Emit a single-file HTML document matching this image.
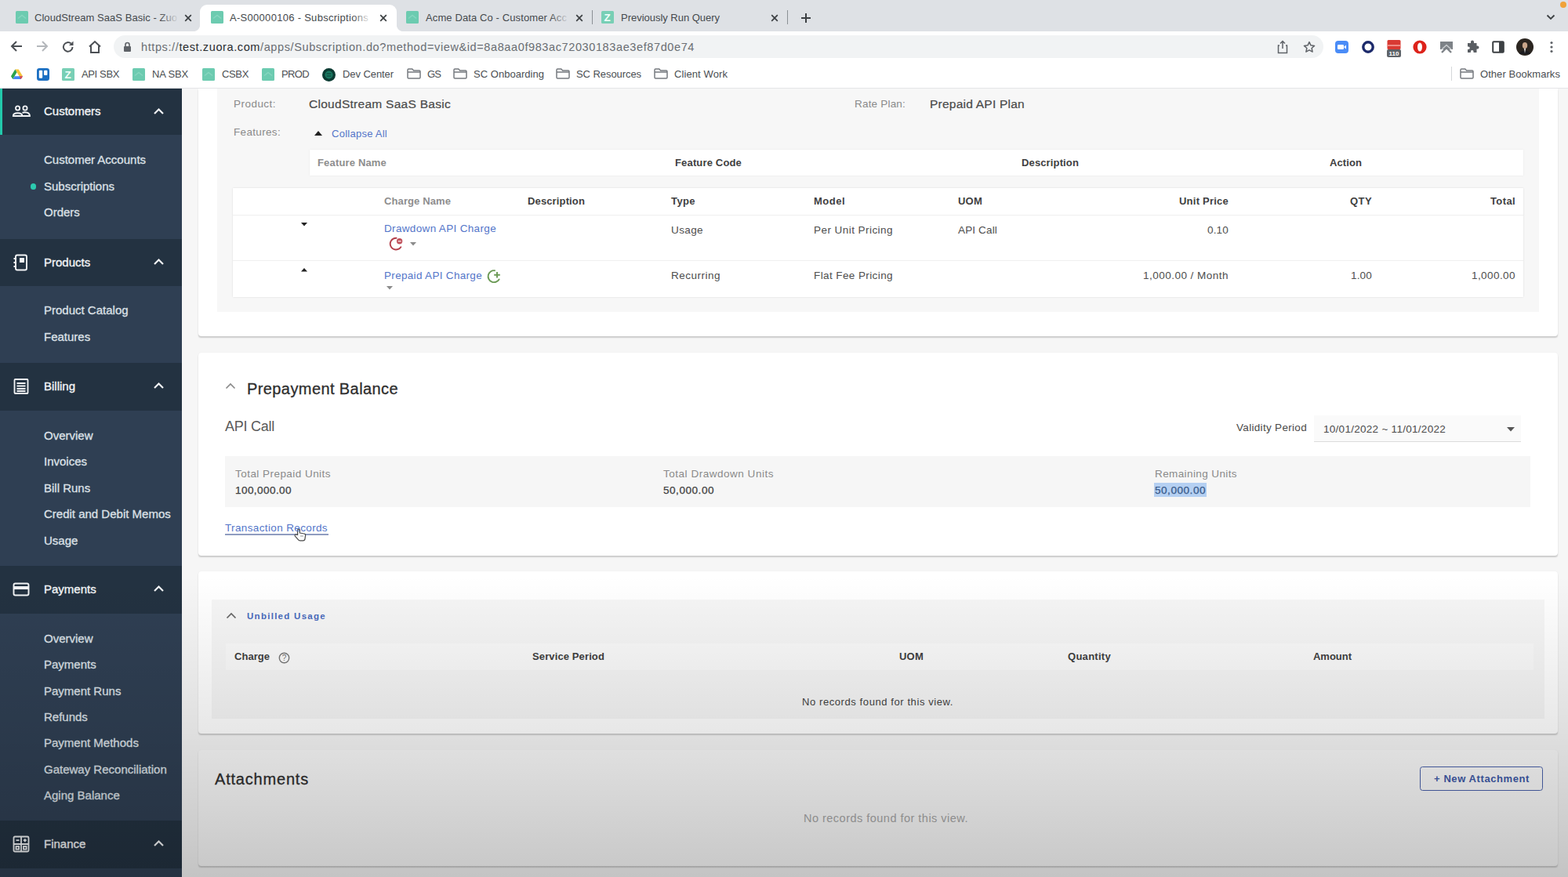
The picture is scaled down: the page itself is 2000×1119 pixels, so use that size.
<!DOCTYPE html><html lang="en"><head><meta charset="utf-8"><title>A-S00000106 - Subscriptions</title><style>
html,body{margin:0;padding:0}body{width:2000px;height:1119px;overflow:hidden;position:relative;background:#f6f6f6;font-family:"Liberation Sans", sans-serif;}
header,nav,main{position:absolute;left:0;top:0;width:0;height:0;display:block}
body div,body span.t,body svg{position:absolute}
span.t{white-space:nowrap;line-height:1;display:block}

.fav{width:16px;height:16px;background:#6ccbb0;border-radius:2px}
.sep{width:1px;background:#9aa0a6}

</style></head><body>
<main id="main">
<div style="left:253px;top:113px;width:1734px;height:316px;background:#ffffff;box-shadow:0 2px 1.5px -0.5px rgba(0,0,0,0.17), 0 0 1.5px rgba(0,0,0,0.06);border-radius:0 0 4px 4px;clip-path:inset(0 -5px -5px -5px);"></div>
<div style="left:277px;top:113px;width:1686px;height:284.5px;background:#f7f7f7;"></div>
<svg style="left:401px;top:167px;" width="10" height="6" viewBox="0 0 10 6"><path d="M0 6 L5 0 L10 6 Z" fill="#222"/></svg>
<div style="left:395px;top:191px;width:1548px;height:33px;background:#ffffff;box-shadow:0 0 2px rgba(0,0,0,0.08);"></div>
<div style="left:297px;top:240px;width:1646px;height:139px;background:#ffffff;box-shadow:0 0 2px rgba(0,0,0,0.12);"></div>
<div style="left:297px;top:274px;width:1646px;height:1px;background:#efefef;"></div>
<div style="left:297px;top:332px;width:1646px;height:1px;background:#efefef;"></div>
<svg style="left:384px;top:284px;" width="8" height="5" viewBox="0 0 8 5"><path d="M0 0 L8 0 L4 4.5 Z" fill="#222"/></svg>
<svg style="left:494px;top:300px;" width="22" height="22" viewBox="0 0 22 22"><path d="M17.3 15.2 A7.4 7.4 0 1 1 11.6 3.7" stroke="#b3404c" stroke-width="1.9" fill="none" stroke-linecap="round"/><circle cx="15.6" cy="7.8" r="3.7" fill="#c0525d"/><path d="M13.6 7.8 H17.6" stroke="#f7dfe1" stroke-width="1.4"/></svg>
<svg style="left:523px;top:309px;" width="8" height="5" viewBox="0 0 8 5"><path d="M0 0 L8 0 L4 4.5 Z" fill="#8b8b8b"/></svg>
<svg style="left:384px;top:342px;" width="8" height="5" viewBox="0 0 8 5"><path d="M0 4.5 L4 0 L8 4.5 Z" fill="#222"/></svg>
<svg style="left:619px;top:341.5px;" width="22" height="22" viewBox="0 0 22 22"><path d="M17.6 14.4 A7.5 7.5 0 1 1 12 3.2" stroke="#6b9a55" stroke-width="1.9" fill="none" stroke-linecap="round"/><path d="M15 5 V12.6 M11.2 8.8 H18.8" stroke="#6b9a55" stroke-width="1.9"/></svg>
<svg style="left:493px;top:365px;" width="8" height="5" viewBox="0 0 8 5"><path d="M0 0 L8 0 L4 4.5 Z" fill="#8b8b8b"/></svg>
<div style="left:253px;top:450px;width:1734px;height:259px;background:#ffffff;box-shadow:0 2px 1.5px -0.5px rgba(0,0,0,0.17), 0 0 1.5px rgba(0,0,0,0.06);border-radius:4px;"></div>
<svg style="left:287px;top:487.5px;" width="14" height="9" viewBox="0 0 14 9"><path d="M1.5 7.5 L7 2 L12.5 7.5" stroke="#888" stroke-width="1.6" fill="none"/></svg>
<div style="left:1676px;top:530px;width:264px;height:33px;background:#fafafa;border-bottom:1px solid #dcdcdc;"></div>
<svg style="left:1922px;top:545px;" width="10" height="6" viewBox="0 0 10 6"><path d="M0 0 L10 0 L5 5.5 Z" fill="#555"/></svg>
<div style="left:287px;top:581.7px;width:1665px;height:65.2px;background:#f6f6f6;"></div>
<div style="left:1472px;top:616px;width:66.5px;height:18px;background:#b5d0f2;"></div>
<div style="left:287px;top:681.4px;width:132px;height:1.2px;background:#8f9cc0;"></div>
<div style="left:253px;top:729px;width:1734px;height:207px;background:#ffffff;box-shadow:0 2px 1.5px -0.5px rgba(0,0,0,0.17), 0 0 1.5px rgba(0,0,0,0.06);border-radius:4px;"></div>
<div style="left:270px;top:765px;width:1700px;height:152px;background:#f6f6f6;"></div>
<svg style="left:288px;top:781.2px;" width="14" height="9" viewBox="0 0 14 9"><path d="M1.5 7.5 L7 2 L12.5 7.5" stroke="#666" stroke-width="1.7" fill="none"/></svg>
<div style="left:288px;top:821px;width:1668px;height:34px;background:#fafafa;"></div>
<svg style="left:355px;top:831.5px;" width="15" height="15" viewBox="0 0 15 15"><circle cx="7.5" cy="7.5" r="6.2" stroke="#777" stroke-width="1.4" fill="none"/><text x="7.5" y="11.2" font-size="10" font-family="Liberation Sans, sans-serif" fill="#777" text-anchor="middle">?</text></svg>
<div style="left:253px;top:957px;width:1734px;height:148px;background:#fafafa;box-shadow:0 2px 1.5px -0.5px rgba(0,0,0,0.17), 0 0 1.5px rgba(0,0,0,0.06);border-radius:4px;"></div>
<div style="left:1810.5px;top:978px;width:155px;height:29px;background:transparent;border:1.5px solid #4a62ab;border-radius:3.5px;"></div>
<svg style="left:374px;top:673px;" width="19" height="19" viewBox="0 0 19 19"><path d="M5.6 9.4 V3.6 a1.4 1.4 0 0 1 2.8 0 V7 l5.6 1 a2 2 0 0 1 1.6 2.3 L15 14.6 a2.6 2.6 0 0 1 -2.6 2.2 H8.8 a3 3 0 0 1 -2.4 -1.2 L2.2 10.8 a1.3 1.3 0 0 1 2 -1.6 Z" fill="#fbfbfb" stroke="#4a4a4a" stroke-width="1.2" stroke-linejoin="round"/><path d="M9 11 h4" stroke="#999" stroke-width="1"/></svg>
<span class="t" id="t39" style="top:126.45px;font-size:13.5px;color:#8a8a8a;letter-spacing:0.465px;left:298px;">Product:</span>
<span class="t" id="t40" style="top:124.85px;font-size:15.5px;color:#4a4a4a;letter-spacing:0.278px;left:394px;-webkit-text-stroke:0.2px #4a4a4a;">CloudStream SaaS Basic</span>
<span class="t" id="t41" style="top:126.45px;font-size:13.5px;color:#8a8a8a;letter-spacing:0.195px;left:1090px;">Rate Plan:</span>
<span class="t" id="t42" style="top:124.85px;font-size:15.5px;color:#4a4a4a;letter-spacing:0.237px;left:1186px;-webkit-text-stroke:0.2px #4a4a4a;">Prepaid API Plan</span>
<span class="t" id="t43" style="top:162.45px;font-size:13.5px;color:#8a8a8a;letter-spacing:0.330px;left:298px;">Features:</span>
<span class="t" id="t44" style="top:163.50px;font-size:13px;color:#5375c9;letter-spacing:0.255px;left:423px;">Collapse All</span>
<span class="t" id="t45" style="top:200.50px;font-size:13px;color:#8e8e8e;font-weight:700;letter-spacing:0.168px;left:405px;">Feature Name</span>
<span class="t" id="t46" style="top:200.50px;font-size:13px;color:#3f3f3f;font-weight:700;letter-spacing:0.160px;left:861px;">Feature Code</span>
<span class="t" id="t47" style="top:200.50px;font-size:13px;color:#3f3f3f;font-weight:700;letter-spacing:0.135px;left:1303px;">Description</span>
<span class="t" id="t48" style="top:200.50px;font-size:13px;color:#3f3f3f;font-weight:700;letter-spacing:0.091px;left:1696px;">Action</span>
<span class="t" id="t49" style="top:249.50px;font-size:13px;color:#8e8e8e;font-weight:700;letter-spacing:0.108px;left:490px;">Charge Name</span>
<span class="t" id="t50" style="top:249.50px;font-size:13px;color:#3f3f3f;font-weight:700;letter-spacing:0.135px;left:673px;">Description</span>
<span class="t" id="t51" style="top:249.50px;font-size:13px;color:#3f3f3f;font-weight:700;letter-spacing:0.402px;left:856px;">Type</span>
<span class="t" id="t52" style="top:249.50px;font-size:13px;color:#3f3f3f;font-weight:700;letter-spacing:0.487px;left:1038px;">Model</span>
<span class="t" id="t53" style="top:249.50px;font-size:13px;color:#3f3f3f;font-weight:700;letter-spacing:0.219px;left:1222px;">UOM</span>
<span class="t" id="t54" style="top:249.50px;font-size:13px;color:#3f3f3f;font-weight:700;letter-spacing:0.231px;left:1504px;">Unit Price</span>
<span class="t" id="t55" style="top:249.50px;font-size:13px;color:#3f3f3f;font-weight:700;letter-spacing:0.422px;left:1722px;">QTY</span>
<span class="t" id="t56" style="top:249.50px;font-size:13px;color:#3f3f3f;font-weight:700;letter-spacing:0.381px;left:1901px;">Total</span>
<span class="t" id="t57" style="top:285.25px;font-size:13.5px;color:#5375c9;letter-spacing:0.338px;left:490px;">Drawdown API Charge</span>
<span class="t" id="t58" style="top:286.65px;font-size:13.5px;color:#4d4d4d;letter-spacing:0.394px;left:856px;">Usage</span>
<span class="t" id="t59" style="top:286.65px;font-size:13.5px;color:#4d4d4d;letter-spacing:0.450px;left:1038px;">Per Unit Pricing</span>
<span class="t" id="t60" style="top:286.65px;font-size:13.5px;color:#4d4d4d;letter-spacing:0.152px;left:1222px;">API Call</span>
<span class="t" id="t61" style="top:286.65px;font-size:13.5px;color:#4d4d4d;letter-spacing:0.180px;left:1540px;">0.10</span>
<span class="t" id="t62" style="top:345.05px;font-size:13.5px;color:#5375c9;letter-spacing:0.315px;left:490px;">Prepaid API Charge</span>
<span class="t" id="t63" style="top:345.05px;font-size:13.5px;color:#4d4d4d;letter-spacing:0.497px;left:856px;">Recurring</span>
<span class="t" id="t64" style="top:345.05px;font-size:13.5px;color:#4d4d4d;letter-spacing:0.403px;left:1038px;">Flat Fee Pricing</span>
<span class="t" id="t65" style="top:345.05px;font-size:13.5px;color:#4d4d4d;letter-spacing:0.479px;left:1458px;">1,000.00 / Month</span>
<span class="t" id="t66" style="top:345.05px;font-size:13.5px;color:#4d4d4d;letter-spacing:0.180px;left:1723px;">1.00</span>
<span class="t" id="t67" style="top:345.05px;font-size:13.5px;color:#4d4d4d;letter-spacing:0.430px;left:1877px;">1,000.00</span>
<span class="t" id="t68" style="top:485.80px;font-size:20px;color:#2e2e2e;letter-spacing:0.407px;left:315px;-webkit-text-stroke:0.3px #2e2e2e;">Prepayment Balance</span>
<span class="t" id="t69" style="top:535.00px;font-size:18px;color:#5a5a5a;letter-spacing:-0.254px;left:287px;">API Call</span>
<span class="t" id="t70" style="top:538.75px;font-size:13.5px;color:#4a4a4a;letter-spacing:0.314px;left:1577px;">Validity Period</span>
<span class="t" id="t71" style="top:541.05px;font-size:13.5px;color:#4a4a4a;letter-spacing:0.282px;left:1688px;">10/01/2022 ~ 11/01/2022</span>
<span class="t" id="t72" style="top:598.45px;font-size:13.5px;color:#8a8a8a;letter-spacing:0.457px;left:300px;">Total Prepaid Units</span>
<span class="t" id="t73" style="top:619.45px;font-size:13.5px;color:#3e3e3e;letter-spacing:0.442px;left:300px;-webkit-text-stroke:0.25px #3e3e3e;">100,000.00</span>
<span class="t" id="t74" style="top:598.45px;font-size:13.5px;color:#8a8a8a;letter-spacing:0.522px;left:846px;">Total Drawdown Units</span>
<span class="t" id="t75" style="top:619.45px;font-size:13.5px;color:#3e3e3e;letter-spacing:0.549px;left:846px;-webkit-text-stroke:0.25px #3e3e3e;">50,000.00</span>
<span class="t" id="t76" style="top:598.45px;font-size:13.5px;color:#8a8a8a;letter-spacing:0.397px;left:1473px;">Remaining Units</span>
<span class="t" id="t77" style="top:619.45px;font-size:13.5px;color:#37598a;letter-spacing:0.549px;left:1473px;-webkit-text-stroke:0.25px #37598a;">50,000.00</span>
<span class="t" id="t78" style="top:667.25px;font-size:13.5px;color:#5375c9;letter-spacing:0.365px;left:287px;">Transaction Records</span>
<span class="t" id="t79" style="top:781.25px;font-size:11.5px;color:#4a6bbd;font-weight:700;letter-spacing:1.280px;left:315px;">Unbilled Usage</span>
<span class="t" id="t80" style="top:830.50px;font-size:13px;color:#3f3f3f;font-weight:700;letter-spacing:0.034px;left:299px;">Charge</span>
<span class="t" id="t81" style="top:830.50px;font-size:13px;color:#3f3f3f;font-weight:700;letter-spacing:0.119px;left:679px;">Service Period</span>
<span class="t" id="t82" style="top:830.50px;font-size:13px;color:#3f3f3f;font-weight:700;letter-spacing:0.219px;left:1147px;">UOM</span>
<span class="t" id="t83" style="top:830.50px;font-size:13px;color:#3f3f3f;font-weight:700;letter-spacing:0.283px;left:1362px;">Quantity</span>
<span class="t" id="t84" style="top:830.50px;font-size:13px;color:#3f3f3f;font-weight:700;letter-spacing:-0.018px;left:1675px;">Amount</span>
<span class="t" id="t85" style="top:889.00px;font-size:13px;color:#444;letter-spacing:0.585px;left:1023px;">No records found for this view.</span>
<span class="t" id="t86" style="top:984.30px;font-size:20px;color:#2e2e2e;letter-spacing:0.803px;left:274px;-webkit-text-stroke:0.3px #2e2e2e;">Attachments</span>
<span class="t" id="t87" style="top:987.10px;font-size:13px;color:#3f5aa8;font-weight:700;letter-spacing:0.589px;left:1829px;">+ New Attachment</span>
<span class="t" id="t88" style="top:1036.55px;font-size:14.5px;color:#a8a8a8;letter-spacing:0.482px;left:1025px;">No records found for this view.</span>
</main>
<nav id="sidebar">
<div style="left:0px;top:113px;width:232px;height:1006px;background:#2f3f53;"></div>
<div style="left:0px;top:113px;width:232px;height:59.3px;background:#233241;"></div>
<svg style="left:195px;top:137px;" width="15" height="10" viewBox="0 0 15 10"><path d="M2 8 L7.5 2.5 L13 8" stroke="#f2f4f6" stroke-width="2.2" fill="none"/></svg>
<svg style="left:15px;top:131px;" width="24" height="24" viewBox="0 0 24 24"><g stroke="#f2f4f6" stroke-width="1.8" fill="none"><circle cx="7.6" cy="7" r="2.6"/><circle cx="17" cy="7" r="2.6"/><path d="M1.8 17 C1.8 12 13.4 12 13.4 17 Z"/><path d="M13.5 12.8 C17 11.5 23 12.5 23 17 H14"/></g></svg>
<div style="left:0px;top:113px;width:3px;height:59.3px;background:#22c9ab;"></div>
<div style="left:0px;top:304.5px;width:232px;height:60.5px;background:#233241;"></div>
<svg style="left:195px;top:328.5px;" width="15" height="10" viewBox="0 0 15 10"><path d="M2 8 L7.5 2.5 L13 8" stroke="#f2f4f6" stroke-width="2.2" fill="none"/></svg>
<svg style="left:15px;top:322.5px;" width="24" height="24" viewBox="0 0 24 24"><g stroke="#f2f4f6" stroke-width="1.9" fill="none"><rect x="5" y="2.5" width="14" height="19" rx="2"/><path d="M2.5 7 H6 M2.5 12 H6 M2.5 17 H6"/></g><rect x="10" y="6" width="6" height="6" fill="#f2f4f6"/></svg>
<div style="left:0px;top:463px;width:232px;height:60.5px;background:#233241;"></div>
<svg style="left:195px;top:487px;" width="15" height="10" viewBox="0 0 15 10"><path d="M2 8 L7.5 2.5 L13 8" stroke="#f2f4f6" stroke-width="2.2" fill="none"/></svg>
<svg style="left:15px;top:481px;" width="24" height="24" viewBox="0 0 24 24"><g stroke="#f2f4f6" stroke-width="1.8" fill="none"><rect x="3.5" y="3" width="17" height="18" rx="1"/><path d="M6.5 8 H17.5 M6.5 11.5 H17.5 M6.5 15 H17.5 M6.5 18 H17.5"/></g></svg>
<div style="left:0px;top:722px;width:232px;height:60.5px;background:#233241;"></div>
<svg style="left:195px;top:746px;" width="15" height="10" viewBox="0 0 15 10"><path d="M2 8 L7.5 2.5 L13 8" stroke="#f2f4f6" stroke-width="2.2" fill="none"/></svg>
<svg style="left:15px;top:740px;" width="24" height="24" viewBox="0 0 24 24"><g stroke="#f2f4f6" stroke-width="1.9" fill="none"><rect x="2.5" y="4.5" width="19" height="15" rx="2"/></g><rect x="2.5" y="8" width="19" height="4" fill="#f2f4f6"/></svg>
<div style="left:0px;top:1047px;width:232px;height:60.5px;background:#233241;"></div>
<svg style="left:195px;top:1071px;" width="15" height="10" viewBox="0 0 15 10"><path d="M2 8 L7.5 2.5 L13 8" stroke="#f2f4f6" stroke-width="2.2" fill="none"/></svg>
<svg style="left:15px;top:1065px;" width="24" height="24" viewBox="0 0 24 24"><g stroke="#f2f4f6" stroke-width="1.8" fill="none"><rect x="2.5" y="2.5" width="19" height="19" rx="1.5"/><path d="M12 2.5 V21.5 M2.5 12 H21.5"/><path d="M5.5 7.2 H9.5 M14.8 7.2 H18.8 M16.8 5.2 V9.2"/><rect x="5.5" y="15" width="3.6" height="3.6"/><rect x="15" y="15" width="3.6" height="3.6"/></g></svg>
<div style="left:38.5px;top:234px;width:7.5px;height:7.5px;background:#2ccab0;border-radius:50%"></div>
<span class="t" id="t17" style="top:134.30px;font-size:15px;color:#f2f4f6;left:56px;-webkit-text-stroke:0.35px #f2f4f6;">Customers</span>
<span class="t" id="t18" style="top:326.60px;font-size:15px;color:#f2f4f6;left:56px;-webkit-text-stroke:0.35px #f2f4f6;">Products</span>
<span class="t" id="t19" style="top:485.10px;font-size:15px;color:#f2f4f6;left:56px;-webkit-text-stroke:0.35px #f2f4f6;">Billing</span>
<span class="t" id="t20" style="top:744.10px;font-size:15px;color:#f2f4f6;left:56px;-webkit-text-stroke:0.35px #f2f4f6;">Payments</span>
<span class="t" id="t21" style="top:1069.40px;font-size:15px;color:#f2f4f6;left:56px;-webkit-text-stroke:0.35px #f2f4f6;">Finance</span>
<span class="t" id="t22" style="top:196.00px;font-size:15px;color:#dde1e7;left:56px;-webkit-text-stroke:0.3px #dde1e7;">Customer Accounts</span>
<span class="t" id="t23" style="top:230.00px;font-size:15px;color:#dde1e7;left:56px;-webkit-text-stroke:0.3px #dde1e7;">Subscriptions</span>
<span class="t" id="t24" style="top:263.00px;font-size:15px;color:#dde1e7;left:56px;-webkit-text-stroke:0.3px #dde1e7;">Orders</span>
<span class="t" id="t25" style="top:388.00px;font-size:15px;color:#dde1e7;left:56px;-webkit-text-stroke:0.3px #dde1e7;">Product Catalog</span>
<span class="t" id="t26" style="top:422.00px;font-size:15px;color:#dde1e7;left:56px;-webkit-text-stroke:0.3px #dde1e7;">Features</span>
<span class="t" id="t27" style="top:547.85px;font-size:15px;color:#dde1e7;left:56px;-webkit-text-stroke:0.3px #dde1e7;">Overview</span>
<span class="t" id="t28" style="top:580.85px;font-size:15px;color:#dde1e7;left:56px;-webkit-text-stroke:0.3px #dde1e7;">Invoices</span>
<span class="t" id="t29" style="top:614.85px;font-size:15px;color:#dde1e7;left:56px;-webkit-text-stroke:0.3px #dde1e7;">Bill Runs</span>
<span class="t" id="t30" style="top:647.85px;font-size:15px;color:#dde1e7;left:56px;-webkit-text-stroke:0.3px #dde1e7;">Credit and Debit Memos</span>
<span class="t" id="t31" style="top:681.85px;font-size:15px;color:#dde1e7;left:56px;-webkit-text-stroke:0.3px #dde1e7;">Usage</span>
<span class="t" id="t32" style="top:806.85px;font-size:15px;color:#dde1e7;left:56px;-webkit-text-stroke:0.3px #dde1e7;">Overview</span>
<span class="t" id="t33" style="top:839.85px;font-size:15px;color:#dde1e7;left:56px;-webkit-text-stroke:0.3px #dde1e7;">Payments</span>
<span class="t" id="t34" style="top:873.85px;font-size:15px;color:#dde1e7;left:56px;-webkit-text-stroke:0.3px #dde1e7;">Payment Runs</span>
<span class="t" id="t35" style="top:906.85px;font-size:15px;color:#dde1e7;left:56px;-webkit-text-stroke:0.3px #dde1e7;">Refunds</span>
<span class="t" id="t36" style="top:939.85px;font-size:15px;color:#dde1e7;left:56px;-webkit-text-stroke:0.3px #dde1e7;">Payment Methods</span>
<span class="t" id="t37" style="top:973.85px;font-size:15px;color:#dde1e7;left:56px;-webkit-text-stroke:0.3px #dde1e7;">Gateway Reconciliation</span>
<span class="t" id="t38" style="top:1006.85px;font-size:15px;color:#dde1e7;left:56px;-webkit-text-stroke:0.3px #dde1e7;">Aging Balance</span>
</nav>
<header id="chrome">
<div style="left:0px;top:0px;width:2000px;height:40px;background:#dee1e5;"></div>
<div style="left:255px;top:6px;width:251px;height:35px;background:#ffffff;border-radius:9px 9px 0 0"></div>
<div style="left:0px;top:40px;width:2000px;height:38px;background:#ffffff;"></div>
<div style="left:506px;top:32px;width:8px;height:8px;background:radial-gradient(circle at 100% 0, #dee1e5 7.6px, #ffffff 8.4px);"></div>
<div style="left:247px;top:32px;width:8px;height:8px;background:radial-gradient(circle at 0 0, #dee1e5 7.6px, #ffffff 8.4px);"></div>
<div style="left:145px;top:45px;width:1543px;height:29px;background:#f1f3f4;border-radius:15px"></div>
<div style="left:0px;top:78px;width:2000px;height:34px;background:#ffffff;"></div>
<div style="left:0px;top:112px;width:2000px;height:1px;background:#e4e5e7;"></div>
<svg style="left:20px;top:14px;" width="16" height="16" viewBox="0 0 16 16"><rect width="16" height="16" rx="1.5" fill="#6ccbb0"/><path d="M3 9.5 L8 5.5 L13 9.5" stroke="#86d6bf" stroke-width="1.6" fill="none"/></svg>
<svg style="left:235px;top:18px;" width="10" height="10" viewBox="0 0 10 10"><path d="M1.2 1.2 L8.8 8.8 M8.8 1.2 L1.2 8.8" stroke="#3c4043" stroke-width="1.7" fill="none"/></svg>
<svg style="left:269px;top:14px;" width="16" height="16" viewBox="0 0 16 16"><rect width="16" height="16" rx="1.5" fill="#6ccbb0"/><path d="M3 9.5 L8 5.5 L13 9.5" stroke="#86d6bf" stroke-width="1.6" fill="none"/></svg>
<svg style="left:484px;top:18px;" width="10" height="10" viewBox="0 0 10 10"><path d="M1.2 1.2 L8.8 8.8 M8.8 1.2 L1.2 8.8" stroke="#3c4043" stroke-width="1.7" fill="none"/></svg>
<svg style="left:518px;top:14px;" width="16" height="16" viewBox="0 0 16 16"><rect width="16" height="16" rx="1.5" fill="#6ccbb0"/><path d="M3 9.5 L8 5.5 L13 9.5" stroke="#86d6bf" stroke-width="1.6" fill="none"/></svg>
<svg style="left:734px;top:18px;" width="10" height="10" viewBox="0 0 10 10"><path d="M1.2 1.2 L8.8 8.8 M8.8 1.2 L1.2 8.8" stroke="#3c4043" stroke-width="1.7" fill="none"/></svg>
<div style="left:755px;top:13px;width:1px;height:18px;background:#8b9095;"></div>
<div style="left:767px;top:14px;width:16px;height:16px;border-radius:1.5px;background:#78cfb5"></div>
<svg style="left:983px;top:18px;" width="10" height="10" viewBox="0 0 10 10"><path d="M1.2 1.2 L8.8 8.8 M8.8 1.2 L1.2 8.8" stroke="#3c4043" stroke-width="1.7" fill="none"/></svg>
<div style="left:1004px;top:13px;width:1px;height:18px;background:#8b9095;"></div>
<svg style="left:1021px;top:16px;" width="14" height="14" viewBox="0 0 14 14"><path d="M7 1 V13 M1 7 H13" stroke="#3c4043" stroke-width="2" fill="none"/></svg>
<svg style="left:1972px;top:18px;" width="12" height="8" viewBox="0 0 12 8"><path d="M1.5 1.5 L6 6 L10.5 1.5" stroke="#3c4043" stroke-width="1.8" fill="none"/></svg>
<div style="left:1990px;top:2px;width:8px;height:8px;background:#f0a23a;border-radius:50%"></div>
<svg style="left:12px;top:50px;" width="18" height="18" viewBox="0 0 18 18"><path d="M16 9 H3 M9 3 L3 9 L9 15" stroke="#4b4f54" stroke-width="2" fill="none"/></svg>
<svg style="left:45px;top:50px;" width="18" height="18" viewBox="0 0 18 18"><path d="M2 9 H15 M9 3 L15 9 L9 15" stroke="#b4b7bb" stroke-width="2" fill="none"/></svg>
<svg style="left:78px;top:50.5px;" width="18" height="18" viewBox="0 0 18 18"><path d="M14.5 9 A5.8 5.8 0 1 1 12.6 4.6" stroke="#4b4f54" stroke-width="2" fill="none"/><path d="M15.5 1.5 V7 H10 Z" fill="#4b4f54"/></svg>
<svg style="left:111px;top:50px;" width="20" height="20" viewBox="0 0 20 20"><path d="M3 9.5 L10 3 L17 9.5 M5 8.5 V17 H15 V8.5" stroke="#4b4f54" stroke-width="2" fill="none"/></svg>
<svg style="left:157px;top:53px;" width="11" height="14" viewBox="0 0 11 14"><rect x="1" y="6" width="9" height="7" rx="1" fill="#5f6368"/><path d="M3 6 V4 A2.5 2.5 0 0 1 8 4 V6" stroke="#5f6368" stroke-width="1.6" fill="none"/></svg>
<svg style="left:1628px;top:51px;" width="16" height="18" viewBox="0 0 16 18"><path d="M4 7 H2.5 V16.5 H13.5 V7 H12 M8 11 V2 M5 4.5 L8 1.5 L11 4.5" stroke="#5f6368" stroke-width="1.5" fill="none"/></svg>
<svg style="left:1662px;top:52px;" width="16" height="16" viewBox="0 0 18 18"><path d="M9 1.8 L11.2 6.6 L16.4 7.2 L12.5 10.7 L13.6 15.9 L9 13.3 L4.4 15.9 L5.5 10.7 L1.6 7.2 L6.8 6.6 Z" stroke="#5f6368" stroke-width="1.7" fill="none" stroke-linejoin="round"/></svg>
<svg style="left:1703px;top:52px;" width="17" height="16" viewBox="0 0 17 16"><rect x="0" y="0" width="17" height="16" rx="4" fill="#4a8cf7"/><rect x="3" y="5" width="8" height="6" rx="1.2" fill="#fff"/><path d="M11.5 7.5 L14 5.5 V10.5 L11.5 8.5 Z" fill="#fff"/></svg>
<svg style="left:1736px;top:51px;" width="18" height="18" viewBox="0 0 18 18"><circle cx="9" cy="9" r="6.2" stroke="#1c2a6b" stroke-width="3.4" fill="#fff"/></svg>
<svg style="left:1768px;top:50px;" width="20" height="26" viewBox="0 0 20 26"><rect x="1.5" y="1" width="17" height="12" rx="1.5" fill="#d93a33"/><rect x="1.5" y="7" width="17" height="2" fill="#ef8a84"/><rect x="1" y="13" width="18" height="10" rx="2" fill="#5f6368"/><text x="10" y="21" font-size="8" font-family="Liberation Sans, sans-serif" font-weight="700" fill="#fff" text-anchor="middle">110</text></svg>
<svg style="left:1802px;top:51px;" width="18" height="18" viewBox="0 0 18 18"><circle cx="9" cy="9" r="8.6" fill="#dd231b"/><ellipse cx="9" cy="9" rx="3" ry="5.6" fill="#fff"/></svg>
<svg style="left:1836px;top:52px;" width="18" height="16" viewBox="0 0 18 16"><rect x="1" y="1" width="16" height="10" fill="#7d8287"/><path d="M3 15 L9 9 L15 15" stroke="#7d8287" stroke-width="2.4" fill="none"/><path d="M3 11 L9 5.5 L15 11" stroke="#c9cccf" stroke-width="1.6" fill="none"/></svg>
<svg style="left:1869px;top:51px;" width="18" height="18" viewBox="0 0 18 18"><path d="M7 2.5 a2 2 0 0 1 4 0 V4 H14.5 V7.5 H15.5 a2 2 0 0 1 0 4 H14.5 V16 H10.5 V14.8 a1.8 1.8 0 0 0 -3.6 0 V16 H3 V12 H4 a1.8 1.8 0 0 0 0 -3.6 H3 V4 H7 Z" fill="#5a5e63"/></svg>
<svg style="left:1903px;top:52px;" width="16" height="16" viewBox="0 0 16 16"><rect x="1.2" y="1.2" width="13.6" height="13.6" rx="1" stroke="#3c4043" stroke-width="2" fill="#fff"/><rect x="9" y="1.2" width="5.8" height="13.6" fill="#3c4043"/></svg>
<svg style="left:1934px;top:49px;" width="22" height="22" viewBox="0 0 22 22"><circle cx="11" cy="11" r="11" fill="#2b2520"/><ellipse cx="11" cy="9" rx="3.2" ry="4" fill="#c9a58a"/><path d="M4 20 C5 14 17 14 18 20 Z" fill="#1b1b1f"/><path d="M10 13 L11 19 L12 13 Z" fill="#e8e8e8"/></svg>
<svg style="left:1977px;top:52px;" width="4" height="16" viewBox="0 0 4 16"><circle cx="2" cy="2.5" r="1.6" fill="#5f6368"/><circle cx="2" cy="8" r="1.6" fill="#5f6368"/><circle cx="2" cy="13.5" r="1.6" fill="#5f6368"/></svg>
<svg style="left:14px;top:87.5px;" width="15" height="13.3" viewBox="0 0 17 15"><path d="M6 0.5 H11 L17 10.5 H12 Z" fill="#f6c338"/><path d="M6 0.5 L0 10.5 L2.7 14.8 L8.5 4.7 Z" fill="#2ba24c"/><path d="M2.7 14.8 H14.3 L17 10.5 H5.4 Z" fill="#4587f4"/><path d="M12 10.5 H17 L14.3 14.8 Z" fill="#e8453c"/></svg>
<svg style="left:46.5px;top:87px;" width="16" height="16" viewBox="0 0 17 17"><rect x="0" y="0" width="17" height="17" rx="3.5" fill="#1b6fc2"/><rect x="3" y="3" width="4.6" height="10.5" rx="1" fill="#fff"/><rect x="9.6" y="3" width="4.6" height="6.5" rx="1" fill="#fff"/></svg>
<div style="left:79px;top:87px;width:16px;height:16px;border-radius:1.5px;background:#78cfb5"></div>
<svg style="left:169px;top:87px;" width="16" height="16" viewBox="0 0 16 16"><rect width="16" height="16" rx="1.5" fill="#6ccbb0"/><path d="M3 9.5 L8 5.5 L13 9.5" stroke="#86d6bf" stroke-width="1.6" fill="none"/></svg>
<svg style="left:258px;top:87px;" width="16" height="16" viewBox="0 0 16 16"><rect width="16" height="16" rx="1.5" fill="#6ccbb0"/><path d="M3 9.5 L8 5.5 L13 9.5" stroke="#86d6bf" stroke-width="1.6" fill="none"/></svg>
<svg style="left:334px;top:87px;" width="16" height="16" viewBox="0 0 16 16"><rect width="16" height="16" rx="1.5" fill="#6ccbb0"/><path d="M3 9.5 L8 5.5 L13 9.5" stroke="#86d6bf" stroke-width="1.6" fill="none"/></svg>
<svg style="left:411px;top:86.5px;" width="17" height="17" viewBox="0 0 17 17"><circle cx="8.5" cy="8.5" r="8.5" fill="#0c3b33"/><circle cx="8.5" cy="8.5" r="5" fill="#1a7a62"/><path d="M5.5 7 H11.5 M5.5 10 H11.5" stroke="#0c3b33" stroke-width="1.2"/></svg>
<svg style="left:519px;top:87px;" width="18" height="14" viewBox="0 0 18 14"><path d="M1 2.2 a1.2 1.2 0 0 1 1.2 -1.2 H6.8 L8.6 3 H15.8 a1.2 1.2 0 0 1 1.2 1.2 V11.8 a1.2 1.2 0 0 1 -1.2 1.2 H2.2 a1.2 1.2 0 0 1 -1.2 -1.2 Z M1 5 H17" stroke="#777b80" stroke-width="1.5" fill="none"/></svg>
<svg style="left:578px;top:87px;" width="18" height="14" viewBox="0 0 18 14"><path d="M1 2.2 a1.2 1.2 0 0 1 1.2 -1.2 H6.8 L8.6 3 H15.8 a1.2 1.2 0 0 1 1.2 1.2 V11.8 a1.2 1.2 0 0 1 -1.2 1.2 H2.2 a1.2 1.2 0 0 1 -1.2 -1.2 Z M1 5 H17" stroke="#777b80" stroke-width="1.5" fill="none"/></svg>
<svg style="left:709px;top:87px;" width="18" height="14" viewBox="0 0 18 14"><path d="M1 2.2 a1.2 1.2 0 0 1 1.2 -1.2 H6.8 L8.6 3 H15.8 a1.2 1.2 0 0 1 1.2 1.2 V11.8 a1.2 1.2 0 0 1 -1.2 1.2 H2.2 a1.2 1.2 0 0 1 -1.2 -1.2 Z M1 5 H17" stroke="#777b80" stroke-width="1.5" fill="none"/></svg>
<svg style="left:834px;top:87px;" width="18" height="14" viewBox="0 0 18 14"><path d="M1 2.2 a1.2 1.2 0 0 1 1.2 -1.2 H6.8 L8.6 3 H15.8 a1.2 1.2 0 0 1 1.2 1.2 V11.8 a1.2 1.2 0 0 1 -1.2 1.2 H2.2 a1.2 1.2 0 0 1 -1.2 -1.2 Z M1 5 H17" stroke="#777b80" stroke-width="1.5" fill="none"/></svg>
<div style="left:1851px;top:85px;width:1px;height:18px;background:#d5d7da;"></div>
<svg style="left:1862px;top:87px;" width="18" height="14" viewBox="0 0 18 14"><path d="M1 2.2 a1.2 1.2 0 0 1 1.2 -1.2 H6.8 L8.6 3 H15.8 a1.2 1.2 0 0 1 1.2 1.2 V11.8 a1.2 1.2 0 0 1 -1.2 1.2 H2.2 a1.2 1.2 0 0 1 -1.2 -1.2 Z M1 5 H17" stroke="#777b80" stroke-width="1.5" fill="none"/></svg>
<span class="t" id="t0" style="top:15.50px;font-size:13px;color:#45494d;letter-spacing:0.049px;left:44px;">CloudStream SaaS Basic - Zuo</span>
<span class="t" id="t1" style="top:15.50px;font-size:13px;color:#45494d;letter-spacing:0.292px;left:293px;">A-S00000106 - Subscriptions</span>
<span class="t" id="t2" style="top:15.50px;font-size:13px;color:#45494d;letter-spacing:0.111px;left:543px;">Acme Data Co - Customer Acc</span>
<span class="t" id="t3" style="top:15.85px;font-size:13.5px;color:#f2fffb;font-weight:700;left:770.6px;">Z</span>
<span class="t" id="t4" style="top:15.50px;font-size:13px;color:#45494d;letter-spacing:-0.023px;left:792px;">Previously Run Query</span>
<span class="t" id="t5" style="top:52.75px;font-size:14.5px;color:#6a6e73;letter-spacing:0.609px;left:180px;">https://<span style="color:#2a2d31">test.zuora.com</span>/apps/Subscription.do?method=view&amp;id=8a8aa0f983ac72030183ae3ef87d0e74</span>
<span class="t" id="t6" style="top:88.85px;font-size:13.5px;color:#f2fffb;font-weight:700;left:82.6px;">Z</span>
<span class="t" id="t7" style="top:87.50px;font-size:13px;color:#4a4e52;letter-spacing:-0.368px;left:104px;">API SBX</span>
<span class="t" id="t8" style="top:87.50px;font-size:13px;color:#4a4e52;letter-spacing:-0.161px;left:194px;">NA SBX</span>
<span class="t" id="t9" style="top:87.50px;font-size:13px;color:#4a4e52;letter-spacing:-0.352px;left:283px;">CSBX</span>
<span class="t" id="t10" style="top:87.50px;font-size:13px;color:#4a4e52;letter-spacing:-0.641px;left:359px;">PROD</span>
<span class="t" id="t11" style="top:87.50px;font-size:13px;color:#4a4e52;letter-spacing:-0.075px;left:437px;">Dev Center</span>
<span class="t" id="t12" style="top:87.50px;font-size:13px;color:#4a4e52;letter-spacing:-0.898px;left:545px;">GS</span>
<span class="t" id="t13" style="top:87.50px;font-size:13px;color:#4a4e52;letter-spacing:0.029px;left:604px;">SC Onboarding</span>
<span class="t" id="t14" style="top:87.50px;font-size:13px;color:#4a4e52;letter-spacing:-0.068px;left:735px;">SC Resources</span>
<span class="t" id="t15" style="top:87.50px;font-size:13px;color:#4a4e52;letter-spacing:0.095px;left:860px;">Client Work</span>
<span class="t" id="t16" style="top:87.50px;font-size:13px;color:#4a4e52;letter-spacing:0.056px;left:1888px;">Other Bookmarks</span>
<div style="left:204px;top:10px;width:24px;height:26px;background:linear-gradient(to right, rgba(222,225,230,0), #dee1e6)"></div>
<div style="left:450px;top:10px;width:24px;height:26px;background:linear-gradient(to right, rgba(255,255,255,0), #fff)"></div>
<div style="left:702px;top:10px;width:24px;height:26px;background:linear-gradient(to right, rgba(222,225,230,0), #dee1e6)"></div>
</header>
<div style="left:0;top:735px;width:2000px;height:384px;background:linear-gradient(to bottom, rgba(0,0,0,0) 0%, rgba(0,0,0,0.09) 50%, rgba(0,0,0,0.205) 100%);pointer-events:none"></div>
</body></html>
